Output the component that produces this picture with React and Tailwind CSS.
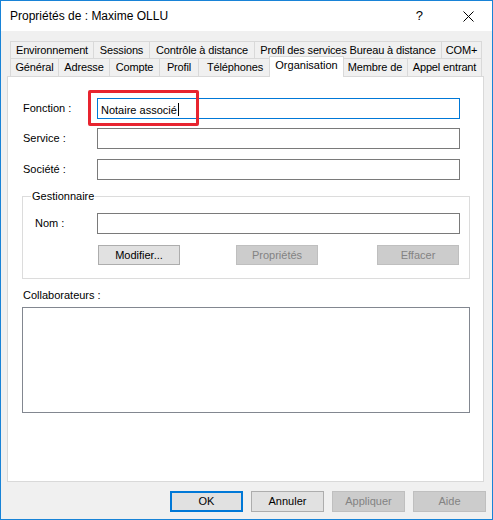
import React from 'react';

const row1 = [
  { label: 'Environnement', w: 83 },
  { label: 'Sessions', w: 56 },
  { label: 'Contrôle à distance', w: 105 },
  { label: 'Profil des services Bureau à distance', w: 187 },
  { label: 'COM+', w: 41 },
];

const row2 = [
  { label: 'Général', w: 48 },
  { label: 'Adresse', w: 51 },
  { label: 'Compte', w: 50 },
  { label: 'Profil', w: 39 },
  { label: 'Téléphones', w: 73 },
  { label: 'Organisation', w: 71, active: true },
  { label: 'Membre de', w: 65 },
  { label: 'Appel entrant', w: 75 },
];

const Tab = ({ label, w, last, active, h }) => {
  if (active) {
    return (
      <div
        style={{ width: w + 4 }}
        className="relative z-10 -mx-[2px] -mt-[2px] flex h-[21px] shrink-0 items-start justify-center border-x border-t border-[#d9d9d9] bg-white pt-[2px] leading-[13px]"
      >
        {label}
      </div>
    );
  }
  return (
    <div
      style={{ width: w }}
      className={`flex shrink-0 items-center justify-center whitespace-nowrap border-l border-t border-[#d9d9d9] bg-[#f0f0f0] leading-[13px] tracking-[-0.15px] ${h} ${last ? 'border-r' : ''}`}
    >
      {label}
    </div>
  );
};

const Field = ({ label, value, focused, labelW = 'w-[74px]', ml = 'ml-[15px]', children }) => (
  <div className={`flex items-center ${ml}`}>
    <span className={`${labelW} shrink-0 leading-[13px]`}>{label}</span>
    <div
      className={`relative flex h-[21px] w-[363px] items-center border bg-white px-[3px] ${
        focused ? 'border-[#0078d7]' : 'border-[#7a7a7a]'
      }`}
    >
      {value && (
        <span className="leading-[13px]">
          {value}
          <span className="ml-[1px] inline-block h-[13px] w-[1px] translate-y-[2px] bg-black" />
        </span>
      )}
      {children}
    </div>
  </div>
);

const Btn = ({ label, disabled, def, w = 'w-[82px]', h = 'h-[20px]' }) => (
  <div
    className={`flex ${w} ${h} items-center justify-center leading-[13px] ${
      def
        ? 'border-2 border-[#0078d7] bg-[#e1e1e1] text-black'
        : disabled
        ? 'border border-[#bfbfbf] bg-[#cccccc] text-[#838383]'
        : 'border border-[#adadad] bg-[#e1e1e1] text-black'
    }`}
  >
    {label}
  </div>
);

export default function App() {
  return (
    <div className="flex h-[520px] w-[493px] flex-col border border-[#1883d7] bg-[#f0f0f0] text-[11px] text-black [font-family:'Liberation_Sans',Arial,sans-serif]">
      {/* title bar */}
      <div className="flex h-[30px] shrink-0 items-center bg-white">
        <span className="ml-[9px] text-[12px]">Propriétés de : Maxime OLLU</span>
        <span className="ml-auto mr-[40px] text-[13px]">?</span>
        <svg width="11" height="11" viewBox="0 0 11 11" className="mr-[18px]">
          <path d="M0.5 0.5 L10.5 10.5 M10.5 0.5 L0.5 10.5" stroke="#000" strokeWidth="1" />
        </svg>
      </div>

      {/* tabs */}
      <div className="ml-[9px] mt-[10px] flex h-[17px]">
        {row1.map((t, i) => (
          <Tab key={t.label} {...t} h="h-[17px]" last={i === row1.length - 1} />
        ))}
      </div>
      <div className="ml-[9px] flex h-[18px]">
        {row2.map((t, i) => (
          <Tab key={t.label} {...t} h="h-[18px]" last={i === row2.length - 1} />
        ))}
      </div>

      {/* panel */}
      <div className="ml-[6px] flex h-[406px] w-[477px] flex-col border border-[#d9d9d9] bg-white">
        <div className="mt-[21px]">
          <Field label="Fonction :" value="Notaire associé" focused>
            <div className="pointer-events-none absolute -left-[10px] -top-[9px] h-[36px] w-[111px] rounded-[2px] border-[3px] border-[#e8242f]" />
          </Field>
        </div>
        <div className="mt-[9px]">
          <Field label="Service :" />
        </div>
        <div className="mt-[10px]">
          <Field label="Société :" />
        </div>

        <fieldset className="ml-[14px] mt-[10px] w-[448px] border border-[#dcdcdc] pb-[13px]">
          <legend className="ml-[8px] px-[1px] leading-[13px]">Gestionnaire</legend>
          <div className="mt-[10px]">
            <Field label="Nom :" labelW="w-[62px]" ml="ml-[12px]" />
          </div>
          <div className="ml-[75px] mt-[11px] flex gap-[56px]">
            <Btn label="Modifier..." />
            <Btn label="Propriétés" disabled />
            <div className="ml-[3px]">
              <Btn label="Effacer" disabled />
            </div>
          </div>
        </fieldset>

        <span className="ml-[15px] mt-[10px] leading-[13px]">Collaborateurs :</span>
        <div className="ml-[14px] mt-[5px] h-[106px] w-[448px] border border-[#828790] bg-white" />
      </div>

      {/* bottom buttons */}
      <div className="mr-[6px] mt-[9px] flex justify-end gap-[8px]">
        <Btn label="OK" def w="w-[73px]" h="h-[21px]" />
        <Btn label="Annuler" w="w-[73px]" h="h-[21px]" />
        <Btn label="Appliquer" disabled w="w-[73px]" h="h-[21px]" />
        <Btn label="Aide" disabled w="w-[73px]" h="h-[21px]" />
      </div>
    </div>
  );
}
